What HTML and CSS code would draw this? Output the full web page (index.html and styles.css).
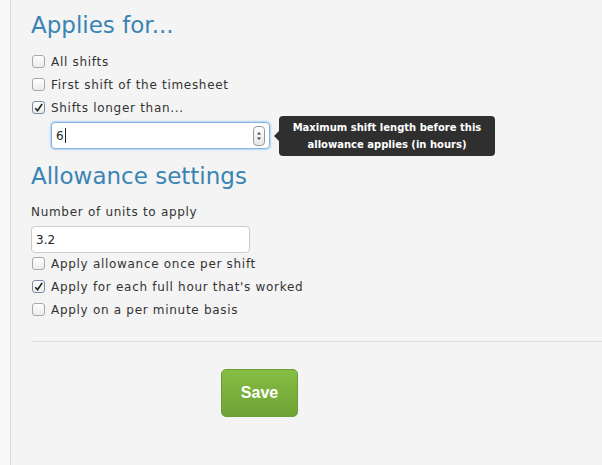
FILE: index.html
```html
<!DOCTYPE html>
<html>
<head>
<meta charset="utf-8">
<link rel="stylesheet" href="styles.css">
</head>
<body>
<div class="page">
  <div class="gutter"></div>
  <div class="main">
    <h2 class="heading">Applies for...</h2>
    <div class="checks">
      <label class="check"><span class="box"></span>All shifts</label>
      <label class="check"><span class="box"></span>First shift of the timesheet</label>
      <label class="check"><span class="box checked"><svg viewBox="0 0 12 12" width="12" height="12"><path d="M2.5 6.2 L5 9 L10 1.5" fill="none" stroke="#222" stroke-width="1.8"/></svg></span>Shifts longer than...</label>
    </div>
    <div class="hours-row">
      <div class="input focus"><span class="val">6</span><span class="caret"></span><span class="spin"><svg viewBox="0 0 8 14" width="8" height="14"><path d="M2 5.5 L4 3 L6 5.5Z M2 8.5 L4 11 L6 8.5Z" fill="#444"/></svg></span>
        <div class="tip">Maximum shift length before this<br>allowance applies (in hours)</div>
      </div>
    </div>
    <h2 class="heading second">Allowance settings</h2>
    <div class="field-label">Number of units to apply</div>
    <div class="input plain"><span class="val">3.2</span></div>
    <div class="checks tight">
      <label class="check"><span class="box"></span>Apply allowance once per shift</label>
      <label class="check"><span class="box checked"><svg viewBox="0 0 12 12" width="12" height="12"><path d="M2.5 6.2 L5 9 L10 1.5" fill="none" stroke="#222" stroke-width="1.8"/></svg></span>Apply for each full hour that's worked</label>
      <label class="check"><span class="box"></span>Apply on a per minute basis</label>
    </div>
    <hr class="sep">
    <div class="actions"><button class="save">Save</button></div>
  </div>
</div>
</body>
</html>
```
FILE: styles.css
```css
html, body { margin: 0; padding: 0; }
body { background: #f4f4f4; font-family: "DejaVu Sans", Verdana, sans-serif; color: #333; }
.page { display: flex; min-height: 465px; }
.gutter { width: 10px; background: #f9f9f9; flex: none; }
.main { flex: 1; border-left: 1px solid #dcdcdc; padding-left: 20px; }
.heading { margin: 0; font-weight: normal; color: #3a84b5; font-size: 23px; line-height: 28px; padding-top: 11px; }
.heading.second { padding-top: 13px; }
.checks { display: flex; flex-direction: column; margin-top: 11px; }
.checks.tight { margin-top: -1px; }
.check { display: flex; align-items: center; height: 23px; font-size: 12px; letter-spacing: 0.7px; color: #333; }
.box { width: 11px; height: 11px; border: 1px solid #a8a8a8; border-radius: 3px; background: linear-gradient(#fff, #ececec); margin: 0 6px 0 1px; display: flex; align-items: center; justify-content: center; box-sizing: content-box; letter-spacing: 0; }
.box.checked { border-color: #7a8aa8; }
.box svg { display: block; }
.hours-row { display: flex; margin-top: 3px; margin-left: 20px; }
.input { position: relative; box-sizing: border-box; width: 219px; height: 27px; background: #fff; border: 1px solid #ccc; border-radius: 4px; display: flex; align-items: center; padding: 0 4px 0 4px; font-size: 12px; color: #222; }
.input.focus { border-color: #7fb5e6; box-shadow: 0 0 2px 1px rgba(110,170,230,0.45); }
.caret { width: 1px; height: 15px; background: #222; margin-left: 1px; }
.spin { margin-left: auto; width: 10px; height: 18px; border: 1px solid #999; border-radius: 4px; display: flex; align-items: center; justify-content: center; background: linear-gradient(#fff, #e6e6e6); }
.tip { position: absolute; left: 227px; top: 50%; transform: translateY(-50%); width: 216px; box-sizing: border-box; background: #2f2f2f; color: #fff; font-weight: bold; font-size: 10px; line-height: 17px; text-align: center; padding: 3px 0; border-radius: 4px; white-space: nowrap; }
.tip::before { content: ""; position: absolute; left: -5px; top: 50%; margin-top: -5px; border-top: 5px solid transparent; border-bottom: 5px solid transparent; border-right: 5px solid #2f2f2f; }
.field-label { font-size: 12px; letter-spacing: 0.7px; margin-top: 15px; line-height: 15px; }
.input.plain { margin-top: 6px; border-color: #ccc; }
.sep { border: 0; border-top: 1px solid #dedede; margin: 20px 0 0 0; }
.actions { padding-left: 190px; padding-top: 27px; }
.save { width: 77px; height: 48px; border: 1px solid #6b9d35; border-radius: 5px; background: linear-gradient(#86bd42, #6ea336); color: #fff; font-family: "Liberation Sans", Arial, sans-serif; font-weight: bold; font-size: 16px; padding: 0; }
```
